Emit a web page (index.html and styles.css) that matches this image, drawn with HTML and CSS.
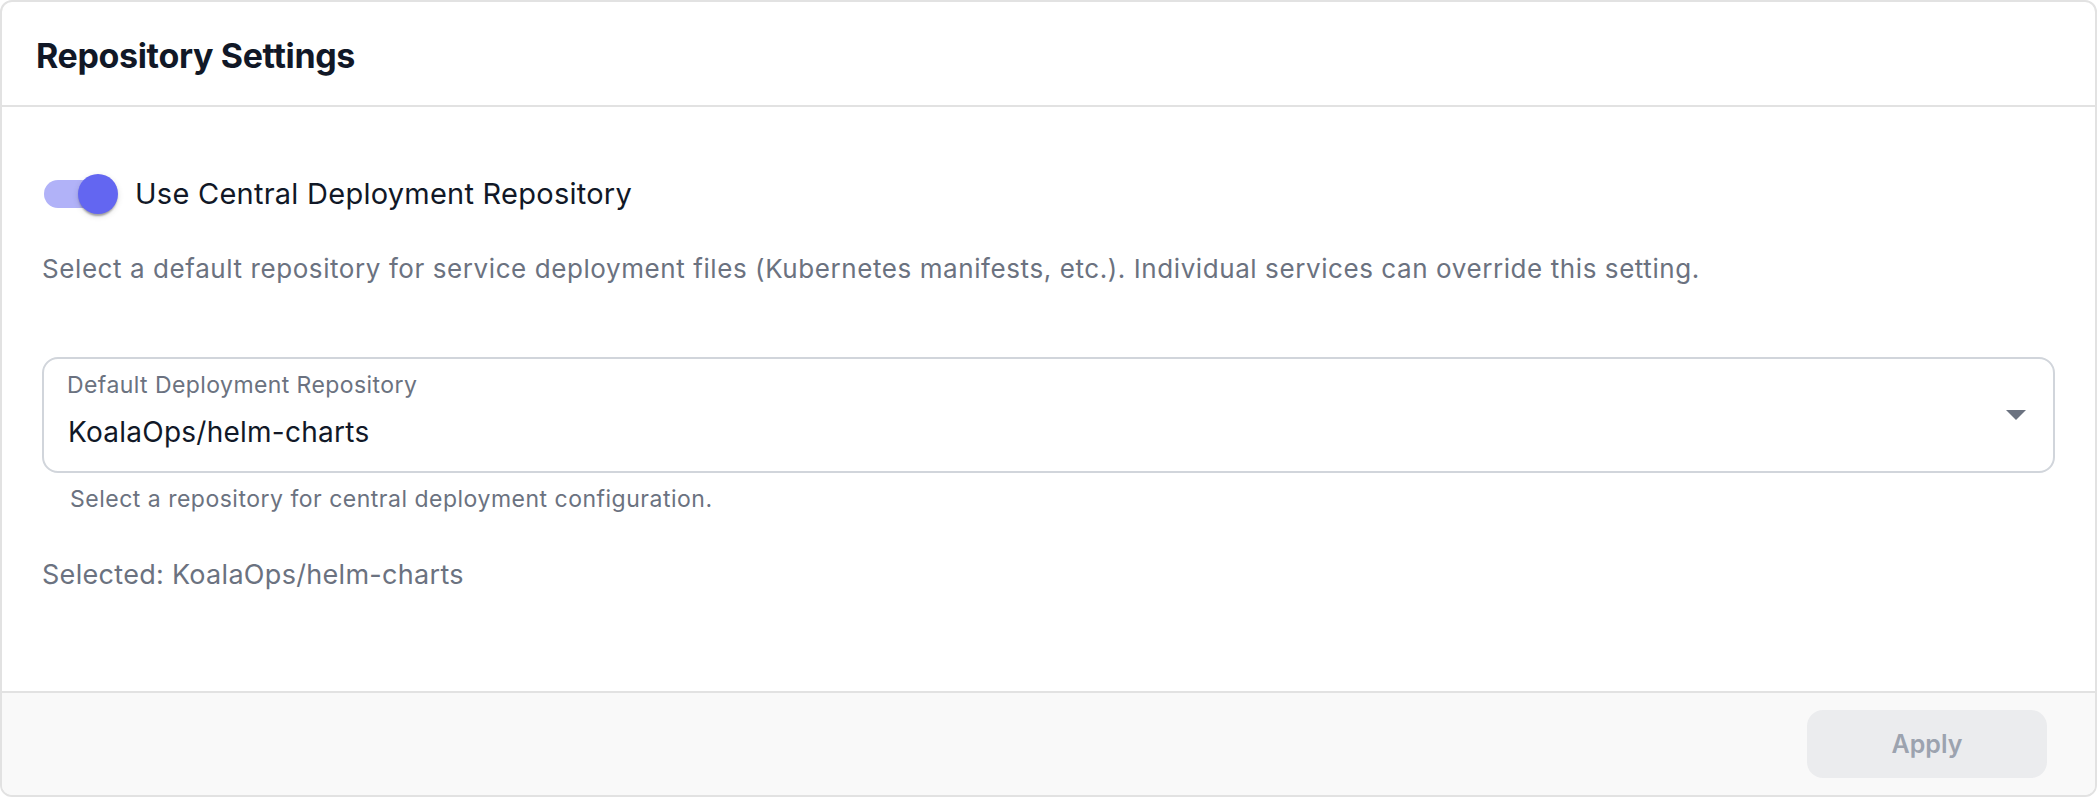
FILE: index.html
```html
<!DOCTYPE html>
<html lang="en">
<head>
<meta charset="utf-8">
<title>Repository Settings</title>
<link rel="stylesheet" href="styles.css">
</head>
<body>
<div class="card">
  <div class="card-header">
    <h2 class="title">Repository Settings</h2>
  </div>
  <div class="card-body">
    <div class="toggle-row">
      <span class="switch" role="switch" aria-checked="true">
        <span class="track"></span>
        <span class="thumb"></span>
      </span>
      <span class="toggle-label">Use Central Deployment Repository</span>
    </div>
    <p class="desc">Select a default repository for service deployment files (Kubernetes manifests, etc.). Individual services can override this setting.</p>
    <div class="select">
      <div class="select-main">
        <div class="select-label">Default Deployment Repository</div>
        <div class="select-value">KoalaOps/helm-charts</div>
      </div>
      <span class="arrow"></span>
    </div>
    <p class="helper">Select a repository for central deployment configuration.</p>
    <p class="selected">Selected: KoalaOps/helm-charts</p>
  </div>
  <div class="card-footer">
    <button class="apply" disabled>Apply</button>
  </div>
</div>
</body>
</html>
```
FILE: styles.css
```css
html, body {
  margin: 0;
  padding: 0;
  background: #ffffff;
}
body {
  font-family: Inter, "Noto Sans", sans-serif;
  color: #111827;
}
.card {
  box-sizing: border-box;
  width: 2097px;
  height: 797px;
  border: 2px solid #e2e2e2;
  border-radius: 12px;
  display: flex;
  flex-direction: column;
  overflow: hidden;
  background: #ffffff;
}
.card-header {
  box-sizing: border-box;
  height: 105px;
  padding: 34px 34px 0;
  border-bottom: 2px solid #e2e2e2;
  flex: none;
}
.title {
  margin: 0;
  font-size: 34px;
  line-height: 40px;
  font-weight: 700;
  color: #111827;
  letter-spacing: -0.35px;
}
.card-body {
  flex: 1;
  padding: 67px 40px 0;
}
.toggle-row {
  display: flex;
  align-items: center;
  height: 40px;
}
.switch {
  position: relative;
  display: block;
  width: 74px;
  height: 40px;
  margin-left: 2px;
  flex: none;
}
.track {
  position: absolute;
  left: 0;
  top: 6px;
  width: 68px;
  height: 28px;
  border-radius: 14px;
  background: #b1b2f8;
}
.thumb {
  position: absolute;
  left: 34px;
  top: 0;
  width: 40px;
  height: 40px;
  border-radius: 50%;
  background: #6366f1;
  box-shadow: 0 4px 2px -2px rgba(0,0,0,0.2), 0 2px 2px 0 rgba(0,0,0,0.14), 0 2px 6px 0 rgba(0,0,0,0.12);
}
.toggle-label {
  margin-left: 17px;
  font-size: 29px;
  line-height: 40px;
  letter-spacing: 0.25px;
  color: #111827;
}
.desc {
  margin: 39px 0 0;
  font-size: 26px;
  line-height: 32px;
  letter-spacing: 0.58px;
  color: #6b7280;
}
.select {
  box-sizing: border-box;
  margin-top: 72px;
  height: 116px;
  border: 2px solid #d1d5db;
  border-radius: 16px;
  display: flex;
  align-items: center;
  padding: 0 27px 0 23px;
}
.select-main {
  flex: 1;
  align-self: flex-start;
  padding-top: 12px;
}
.select-label {
  font-size: 23px;
  line-height: 28px;
  letter-spacing: 0.42px;
  color: #6b7280;
}
.select-value {
  margin-top: 15px;
  padding-left: 1px;
  font-size: 28px;
  line-height: 36px;
  letter-spacing: 0.25px;
  color: #111827;
}
.arrow {
  width: 0;
  height: 0;
  border-left: 10px solid transparent;
  border-right: 10px solid transparent;
  border-top: 10px solid #6b7280;
  flex: none;
}
.helper {
  margin: 12px 0 0 28px;
  font-size: 23px;
  line-height: 28px;
  letter-spacing: 0.5px;
  color: #6b7280;
}
.selected {
  margin: 46px 0 0;
  font-size: 27px;
  line-height: 32px;
  letter-spacing: 0.3px;
  color: #6b7280;
}
.card-footer {
  flex: none;
  box-sizing: border-box;
  height: 104px;
  border-top: 2px solid #e2e2e2;
  background: #f9f9f9;
  display: flex;
  justify-content: flex-end;
  align-items: flex-start;
  padding: 17px 48px 0 0;
}
.apply {
  width: 240px;
  height: 68px;
  border: none;
  border-radius: 16px;
  background: #ebecee;
  color: #9ca3af;
  font-family: Inter, "Noto Sans", sans-serif;
  font-size: 25px;
  font-weight: 600;
  padding: 0;
}
```
